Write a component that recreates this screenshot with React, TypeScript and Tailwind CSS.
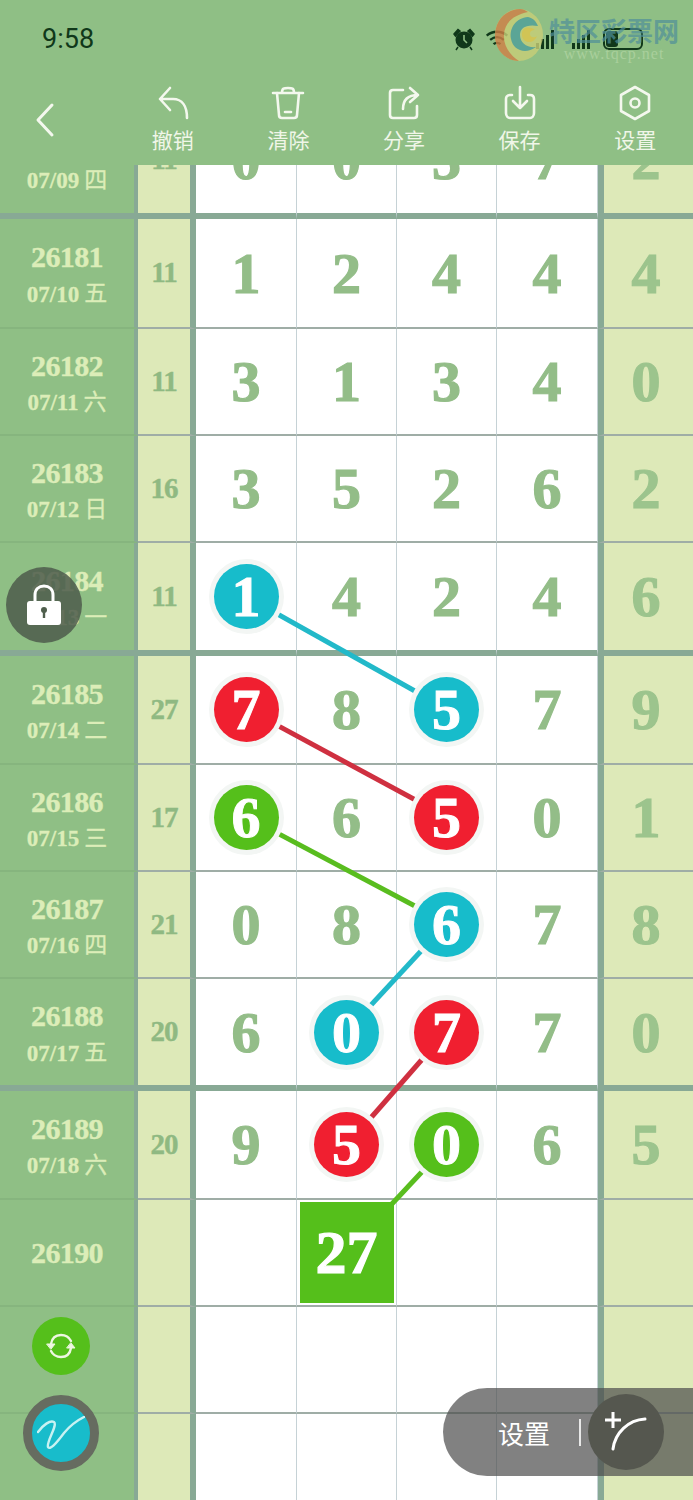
import React from 'react';

type Ball = { i: number; c: string };
type Row = {
	no?: string;
	date?: string;
	day?: string;
	sum?: string;
	nums?: string[];
	last?: string;
	balls?: Ball[];
	h: string;
	thick?: boolean;
};

const TEAL = 'bg-[#17bccb]';
const RED = 'bg-[#f01f30]';
const GREEN = 'bg-[#55bf1b]';

const rows: Row[] = [
	{ no: '26180', date: '07/09', day: '四', sum: '11', nums: ['0', '0', '3', '7'], last: '2', h: 'h-[113px]', thick: true },
	{ no: '26181', date: '07/10', day: '五', sum: '11', nums: ['1', '2', '4', '4'], last: '4', h: 'h-[110px]' },
	{ no: '26182', date: '07/11', day: '六', sum: '11', nums: ['3', '1', '3', '4'], last: '0', h: 'h-[107px]' },
	{ no: '26183', date: '07/12', day: '日', sum: '16', nums: ['3', '5', '2', '6'], last: '2', h: 'h-[107px]' },
	{ no: '26184', date: '07/13', day: '一', sum: '11', nums: ['1', '4', '2', '4'], last: '6', h: 'h-[113px]', thick: true, balls: [{ i: 0, c: TEAL }] },
	{ no: '26185', date: '07/14', day: '二', sum: '27', nums: ['7', '8', '5', '7'], last: '9', h: 'h-[109px]', balls: [{ i: 0, c: RED }, { i: 2, c: TEAL }] },
	{ no: '26186', date: '07/15', day: '三', sum: '17', nums: ['6', '6', '5', '0'], last: '1', h: 'h-[107px]', balls: [{ i: 0, c: GREEN }, { i: 2, c: RED }] },
	{ no: '26187', date: '07/16', day: '四', sum: '21', nums: ['0', '8', '6', '7'], last: '8', h: 'h-[107px]', balls: [{ i: 2, c: TEAL }] },
	{ no: '26188', date: '07/17', day: '五', sum: '20', nums: ['6', '0', '7', '7'], last: '0', h: 'h-[112px]', thick: true, balls: [{ i: 1, c: TEAL }, { i: 2, c: RED }] },
	{ no: '26189', date: '07/18', day: '六', sum: '20', nums: ['9', '5', '0', '6'], last: '5', h: 'h-[109px]', balls: [{ i: 1, c: RED }, { i: 2, c: GREEN }] },
	{ no: '26190', h: 'h-[107px]' },
	{ h: 'h-[107px]' },
	{ h: 'h-[107px]' },
];

const cellWidths = ['w-[101px]', 'w-[100px]', 'w-[100px]', 'w-[101px]'];

const serif = "font-['Liberation_Serif','Noto_Sans_CJK_SC',serif]";
const heavy = '[-webkit-text-stroke:1.2px_currentColor]';

const ToolIcon = ({ children }: { children: React.ReactNode }) => (
	<svg width="36" height="36" viewBox="0 0 36 36" fill="none" stroke="#f4f8ee" strokeWidth="2.6" strokeLinecap="round" strokeLinejoin="round">
		{children}
	</svg>
);

const tools = [
	{
		label: '撤销',
		icon: <path d="M15 3 L5 14 L15 25 M5 14 H18 C27 14 32 21 32 33" />,
	},
	{
		label: '清除',
		icon: (
			<>
				<path d="M3 8 H33 M12 8 C12 3 14 3 18 3 C22 3 24 3 24 8" />
				<path d="M7 8 L9 30 C9 32 10 33 12 33 H24 C26 33 27 32 27 30 L29 8" />
				<path d="M15 27 H21" />
			</>
		),
	},
	{
		label: '分享',
		icon: (
			<>
				<path d="M17 5 H7 C5 5 4 6 4 8 V30 C4 32 5 33 7 33 H28 C30 33 31 32 31 30 V21" />
				<path d="M24 3 L32 10 L24 17 M32 10 C22 10 17 15 17 24" />
			</>
		),
	},
	{
		label: '保存',
		icon: (
			<>
				<path d="M10 10 H8 C5 10 4 12 4 14 V28 C4 31 6 33 8 33 H28 C30 33 32 31 32 28 V14 C32 12 31 10 28 10 H26" />
				<path d="M18 2 V23 M11 16 L18 23 L25 16" />
			</>
		),
	},
	{
		label: '设置',
		icon: (
			<>
				<path d="M18 2 L32 10 V26 L18 34 L4 26 V10 Z" />
				<circle cx="18" cy="18" r="4.5" />
			</>
		),
	},
];

const links = [
	{ x1: 247, y1: 597, x2: 447, y2: 709, c: '#22b9c9' },
	{ x1: 247, y1: 709, x2: 447, y2: 817, c: '#cf3040' },
	{ x1: 247, y1: 817, x2: 447, y2: 923, c: '#59bd1f' },
	{ x1: 447, y1: 923, x2: 347, y2: 1031, c: '#22b9c9' },
	{ x1: 447, y1: 1031, x2: 347, y2: 1145, c: '#cf3040' },
	{ x1: 447, y1: 1145, x2: 347, y2: 1252, c: '#59bd1f' },
];

const Bars = () => (
	<div className="flex h-[20px] items-end gap-[2px]">
		<span className="h-[6px] w-[3px] bg-[#10381a]" />
		<span className="h-[10px] w-[3px] bg-[#10381a]" />
		<span className="h-[14px] w-[3px] bg-[#10381a]" />
		<span className="h-[19px] w-[3px] bg-[#10381a]" />
	</div>
);

const StatusBar = () => (
	<div className="relative flex h-[78px] items-center justify-between pl-[42px] pr-[50px]">
		<span className="font-['Roboto',sans-serif] text-[27px] text-[#10381a]">9:58</span>
		<div className="flex items-center">
			<svg width="24" height="24" viewBox="0 0 24 24" fill="#10381a">
				<circle cx="12" cy="13" r="8.5" />
				<path d="M2 7 L6 2.5 L8 4 L3.5 9 Z M22 7 L18 2.5 L16 4 L20.5 9 Z M6 20 L4 23 M18 20 L20 23" stroke="#10381a" strokeWidth="1.5" />
				<path d="M12 8 V13 L15 16" stroke="#8fbf85" strokeWidth="1.6" fill="none" />
			</svg>
			<svg className="ml-[9px]" width="24" height="20" viewBox="0 0 28 22" fill="none" stroke="#10381a" strokeWidth="2.8">
				<path d="M2 7 C9 1 19 1 26 7 M6 12 C11 8 17 8 22 12 M10 17 C12 15 16 15 18 17" />
			</svg>
			<div className="ml-[27px]">
				<Bars />
			</div>
			<div className="ml-[18px]">
				<Bars />
			</div>
			<div className="ml-[13px] flex h-[22px] w-[40px] items-stretch rounded-[6px] border-2 border-[#10381a] p-[1px]">
				<span className="w-[12px] rounded-[3px] bg-[#10381a]" />
			</div>
		</div>
		{/* watermark */}
		<div className="absolute left-[494px] top-[9px] flex items-start">
			<svg className="opacity-80" width="50" height="52" viewBox="0 0 50 52">
				<ellipse cx="25" cy="26" rx="24" ry="26" fill="#c9cf78" />
				<path d="M26 0 C9 1 1 14 1 27 C1 41 12 52 25 52 C16 46 9 37 10 25 C11 13 20 6 34 3 C31 1 29 0 26 0 Z" fill="#d27f46" />
				<path d="M34 8 C22 9 15 19 17 30 C19 41 31 46 42 38 C33 39 26 34 26 26 C26 19 32 15 44 17 C42 12 39 9 34 8 Z" fill="#4f9f9b" />
				<path d="M31 19 C27 21 27 28 30 31 C34 35 41 33 43 27 C41 29 36 29 36 25 C36 22 38 21 41 21 C39 19 35 18 31 19 Z" fill="#e2c64a" />
			</svg>
			<div className="ml-[5px] flex flex-col items-center pt-[5px]">
				<span className="font-['Noto_Sans_CJK_SC',sans-serif] text-[26px] font-bold leading-[32px] text-[#4f8f9a] opacity-70">特区彩票网</span>
				<span className="font-['Liberation_Serif',serif] text-[16px] leading-[16px] tracking-[1px] text-[#a9cf9c]">www.tqcp.net</span>
			</div>
		</div>
	</div>
);

const Toolbar = () => (
	<div className="flex h-[87px] items-start pt-[7px]">
		<div className="flex w-[115px] justify-start pl-[32px] pt-[17px]">
			<svg width="28" height="36" viewBox="0 0 28 36" fill="none" stroke="#f4f8ee" strokeWidth="3" strokeLinecap="round" strokeLinejoin="round">
				<path d="M20 3 L6 18 L20 33" />
			</svg>
		</div>
		{tools.map((t) => (
			<div key={t.label} className="flex w-[115.6px] flex-col items-center">
				<ToolIcon>{t.icon}</ToolIcon>
				<span className="mt-[3px] font-['Noto_Sans_CJK_SC',sans-serif] text-[21px] leading-[30px] text-[#f0f6e8]">{t.label}</span>
			</div>
		))}
	</div>
);

const GridRow = ({ row }: { row: Row }) => {
	const line = row.thick ? 'border-b-[6px] border-b-[#88a995]' : 'border-b-2 border-b-[#9fada6]';
	const leftLine = row.thick ? 'border-b-[6px] border-b-[#88a995]' : 'border-b-2 border-b-[#86b57e]';
	return (
		<div className={`flex ${row.h}`}>
			<div className={`flex w-[138px] flex-col items-center justify-center border-r-4 border-r-[#88a995] ${leftLine} bg-[#8fbf85] text-[#dcedb8] ${row.date ? 'pt-[6px]' : ''}`}>
				{row.no && <span className={`${serif} text-[30px] font-bold leading-[36px] tracking-[-0.6px] [-webkit-text-stroke:0.4px_currentColor]`}>{row.no}</span>}
				{row.date && (
					<span className={`${serif} flex items-center gap-[5px] text-[23px] font-bold leading-[33px] [-webkit-text-stroke:0.3px_currentColor]`}>
						{row.date}
						<span className="mb-[5px] font-['Noto_Sans_CJK_SC',sans-serif] text-[23px] font-normal">{row.day}</span>
					</span>
				)}
			</div>
			<div className={`flex w-[58px] items-center justify-center border-r-[6px] border-r-[#88a995] ${line} bg-[#dde9b8]`}>
				<span className={`${serif} text-[29px] font-bold tracking-[-1px] text-[#8fb982] [-webkit-text-stroke:0.4px_currentColor]`}>{row.sum}</span>
			</div>
			{cellWidths.map((w, i) => {
				const ball = row.balls?.find((b) => b.i === i);
				const text = row.nums?.[i];
				return (
					<div key={i} className={`flex ${w} items-center justify-center border-r border-r-[#c6d2d6] ${line} bg-white last:border-r-0`}>
						{row.no === '26190' && i === 1 ? (
							<div className={`relative z-10 flex h-[101px] w-[94px] items-center justify-center ${GREEN} ${serif} ${heavy} text-[62px] font-bold text-white`}>27</div>
						) : ball ? (
							<div className={`relative z-10 flex h-[65px] w-[65px] items-center justify-center rounded-full ${ball.c} ${serif} text-[58px] font-bold text-white ring-[5px] ring-[#f3f6f4] [-webkit-text-stroke:1px_#fff]`}>
								{text}
							</div>
						) : (
							<span className={`${serif} ${heavy} text-[58px] font-bold text-[#93bd88]`}>{text}</span>
						)}
					</div>
				);
			})}
			<div className={`flex w-[95px] items-center justify-center border-l-[6px] border-l-[#88a995] ${line} bg-[#dde9b8] pr-[5px]`}>
				<span className={`${serif} ${heavy} text-[58px] font-bold text-[#9cc48d]`}>{row.last}</span>
			</div>
		</div>
	);
};

export default function App() {
	return (
		<div className="relative h-[1500px] w-[693px] overflow-hidden bg-white">
			<header className="relative z-20 h-[165px] bg-[#8fbf85]">
				<StatusBar />
				<Toolbar />
			</header>

			<div className="relative -mt-[59px]">
				{rows.map((r, i) => (
					<GridRow key={i} row={r} />
				))}
				<svg className="absolute left-0 top-0" width="693" height="1394" viewBox="0 106 693 1394">
					{links.map((l, i) => (
						<line key={i} x1={l.x1} y1={l.y1} x2={l.x2} y2={l.y2} stroke={l.c} strokeWidth="5" />
					))}
				</svg>
			</div>

			{/* lock */}
			<div className="absolute left-[6px] top-[567px] z-30 flex h-[76px] w-[76px] items-center justify-center rounded-full bg-[#4d5a4b]/85">
				<svg width="36" height="42" viewBox="0 0 36 42">
					<path d="M9 19 V11 C9 5 13 2 18 2 C23 2 27 5 27 11 V19" fill="none" stroke="#fff" strokeWidth="3" />
					<rect x="1" y="17" width="34" height="24" rx="3" fill="#fff" />
					<circle cx="18" cy="26" r="3" fill="#4f5f4d" />
					<rect x="16.8" y="27" width="2.4" height="7" fill="#4f5f4d" />
				</svg>
			</div>

			{/* sync */}
			<div className={`absolute left-[32px] top-[1317px] z-30 flex h-[58px] w-[58px] items-center justify-center rounded-full ${GREEN}`}>
				<svg width="32" height="28" viewBox="0 0 32 28" fill="none" stroke="#eef7e2" strokeWidth="2.4" strokeLinecap="round">
					<path d="M6 12 C7 6 11 3 16 3 C20 3 24 5 26 9" />
					<path d="M26 16 C25 22 21 25 16 25 C12 25 8 23 6 19" />
					<path d="M2 12 L10 12 L6 17 Z" fill="#eef7e2" strokeWidth="1" strokeLinejoin="round" />
					<path d="M22 16 L30 16 L26 11 Z" fill="#eef7e2" strokeWidth="1" strokeLinejoin="round" />
				</svg>
			</div>

			{/* pen */}
			<div className="absolute left-[23px] top-[1395px] z-30 flex h-[76px] w-[76px] items-center justify-center rounded-full border-[9px] border-[#666c60] bg-[#18bccb]">
				<svg width="48" height="34" viewBox="0 0 48 34" fill="none" stroke="#c8f2f2" strokeWidth="2.4" strokeLinecap="round">
					<path d="M1 16 C6 9 13 4 17 6 C21 9 9 26 11 31 C13 34 18 29 27 17 C32 11 39 5 47 1" />
				</svg>
			</div>

			{/* bottom pill */}
			<div className="absolute right-0 top-[1388px] z-30 flex h-[88px] w-[250px] items-center rounded-l-[44px] bg-[#4c4c4c]/70 pl-[55px]">
				<span className="font-['Noto_Sans_CJK_SC',sans-serif] text-[26px] text-white">设置</span>
				<span className="ml-[29px] h-[27px] w-[2px] bg-[#e8e8e8]" />
				<div className="ml-[7px] flex h-[76px] w-[76px] items-center justify-center rounded-full bg-[#55574f]">
					<svg width="44" height="42" viewBox="0 0 44 42" fill="none" stroke="#fff" strokeWidth="3" strokeLinecap="round">
						<path d="M1 9 H17 M9 1 V17" strokeLinecap="butt" />
						<path d="M9 38 C11 22 24 9 41 8" />
					</svg>
				</div>
			</div>
		</div>
	);
}
